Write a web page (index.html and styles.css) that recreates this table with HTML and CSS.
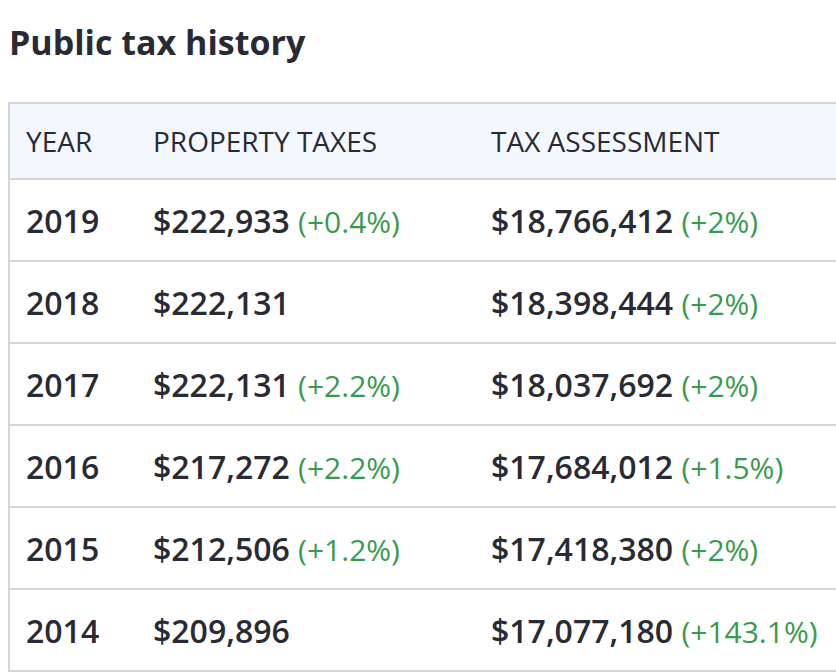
FILE: index.html
```html
<!DOCTYPE html>
<html lang="en">
<head>
<meta charset="utf-8">
<title>Public tax history</title>
<link rel="stylesheet" href="styles.css">
</head>
<body>
<h2 class="title">Public tax history</h2>
<div class="wrap">
<table class="tax">
  <thead>
    <tr><th class="c-year">YEAR</th><th class="c-tax">PROPERTY TAXES</th><th class="c-assess">TAX ASSESSMENT</th></tr>
  </thead>
  <tbody>
    <tr><td>2019</td><td>$222,933 <span class="chg">(+0.4%)</span></td><td>$18,766,412 <span class="chg">(+2%)</span></td></tr>
    <tr><td>2018</td><td>$222,131</td><td>$18,398,444 <span class="chg">(+2%)</span></td></tr>
    <tr><td>2017</td><td>$222,131 <span class="chg">(+2.2%)</span></td><td>$18,037,692 <span class="chg">(+2%)</span></td></tr>
    <tr><td>2016</td><td>$217,272 <span class="chg">(+2.2%)</span></td><td>$17,684,012 <span class="chg">(+1.5%)</span></td></tr>
    <tr><td>2015</td><td>$212,506 <span class="chg">(+1.2%)</span></td><td>$17,418,380 <span class="chg">(+2%)</span></td></tr>
    <tr><td>2014</td><td>$209,896</td><td>$17,077,180 <span class="chg">(+143.1%)</span></td></tr>
  </tbody>
</table>
</div>
</body>
</html>
```

FILE: styles.css
```css
html, body {
  margin: 0;
  padding: 0;
  background: #ffffff;
}
body {
  font-family: "Open Sans", "Liberation Sans", sans-serif;
  color: #2a2a33;
  padding: 0 0 0 8px;
  overflow: hidden;
}
.title {
  margin: 0;
  padding: 20px 0 0 1px;
  font-size: 34px;
  font-weight: 700;
  line-height: 44px;
  height: 102px;
  box-sizing: border-box;
}
.wrap {
  overflow: hidden;
  width: 828px;
}
.tax {
  border-collapse: collapse;
  width: 900px;
  table-layout: fixed;
}
.tax th, .tax td {
  text-align: left;
  white-space: nowrap;
  padding: 0 0 0 16px;
  border-top: 2px solid #d3d5d8;
  border-bottom: 2px solid #d3d5d8;
}
.tax th:first-child, .tax td:first-child {
  border-left: 2px solid #d3d5d8;
}
.tax thead th {
  background: #f3f8fe;
  font-weight: 400;
  font-size: 28px;
  height: 74px;
  color: #2a2a33;
}
.c-year { width: 111px; }
.c-tax { width: 322px; }
.tax td {
  font-size: 32px;
  font-weight: 600;
  height: 80px;
}
.chg {
  color: #3a9a4c;
  font-weight: 400;
  font-size: 30px;
}
```
